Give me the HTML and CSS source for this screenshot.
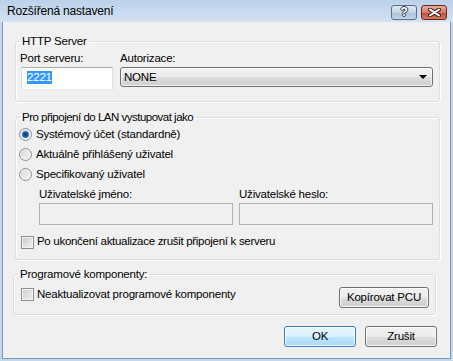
FILE: index.html
```html
<!DOCTYPE html>
<html>
<head>
  <title>Rozšířená nastavení</title>
  <link rel="stylesheet" href="styles.css">
</head>
<body>
<div class="window">
  <div class="titlebar">
    <span class="title">Rozšířená nastavení</span>
    <div class="caption-buttons">
      <span class="cap cap-help">?</span>
      <span class="cap cap-close">
        <svg width="13" height="9" viewBox="0 0 13 9">
          <path d="M2 1.5 L11 7.5 M11 1.5 L2 7.5" stroke="#3b2a26" stroke-width="4" stroke-linecap="round"/>
          <path d="M2 1.5 L11 7.5 M11 1.5 L2 7.5" stroke="#ffffff" stroke-width="2" stroke-linecap="round"/>
        </svg>
      </span>
    </div>
  </div>

  <div class="client">
    <!-- HTTP server -->
    <fieldset class="group group-http">
      <legend>HTTP Server</legend>
      <div class="http-row">
        <div class="field field-port">
          <label>Port serveru:</label>
          <div class="textbox"><span class="selected">2221</span></div>
        </div>
        <div class="field field-auth">
          <label>Autorizace:</label>
          <div class="combo">
            <span>NONE</span>
            <span class="arrow"></span>
          </div>
        </div>
      </div>
    </fieldset>

    <!-- LAN account -->
    <fieldset class="group group-lan">
      <legend>Pro připojení do LAN vystupovat jako</legend>
      <div class="option"><span class="radio checked"></span>Systémový účet (standardně)</div>
      <div class="option"><span class="radio"></span>Aktuálně přihlášený uživatel</div>
      <div class="option"><span class="radio"></span>Specifikovaný uživatel</div>
      <div class="credentials">
        <div class="field">
          <label>Uživatelské jméno:</label>
          <input type="text" class="textbox-input" disabled>
        </div>
        <div class="field">
          <label>Uživatelské heslo:</label>
          <input type="password" class="textbox-input" disabled>
        </div>
      </div>
      <div class="checkrow checkrow-lan"><span class="check"></span>Po ukončení aktualizace zrušit připojení k serveru</div>
    </fieldset>

    <!-- program components -->
    <fieldset class="group group-pcu">
      <legend>Programové komponenty:</legend>
      <div class="pcu-row">
        <div class="checkrow"><span class="check"></span>Neaktualizovat programové komponenty</div>
        <button class="btn btn-pcu">Kopírovat PCU</button>
      </div>
    </fieldset>

    <div class="dialog-buttons">
      <button class="btn btn-default">OK</button>
      <button class="btn">Zrušit</button>
    </div>
  </div>
</div>
</body>
</html>
```

FILE: styles.css
```css
/* Reset and base font */
body {
  margin: 0;
  padding: 0;
  font-family: "Liberation Sans", Arial, sans-serif;
  font-size: 11.5px;
  letter-spacing: -0.2px;
  line-height: 15px;
  color: #000;
  background: #c4d7ed;
}

/* Window frame */
.window {
  width: 453px;
  height: 361px;
  box-sizing: border-box;
  padding: 0 2px 2px 2px;
  background: #c4d7ed;
  display: flex;
  flex-direction: column;
}

.titlebar {
  height: 22px;
  margin: 0 -2px;
  padding: 0 6px 0 7px;
  display: flex;
  align-items: center;
  justify-content: space-between;
  background: linear-gradient(#bcd1ea, #d3e2f2);
}

.title {
  margin-top: 1px;
  font-size: 12px;
}

.caption-buttons {
  display: flex;
  gap: 4px;
  margin-top: 2px;
}

.cap {
  width: 24px;
  height: 13px;
  border: 1px solid #58708d;
  border-radius: 3px;
  display: flex;
  align-items: center;
  justify-content: center;
}

.cap-help {
  background: linear-gradient(#e2ebf5 0%, #c4d3e4 50%, #acc0d7 51%, #c3d5e9 100%);
  color: #fff;
  font-weight: bold;
  font-size: 12px;
  text-shadow: 0 0 1px #2f3f55, 1px 0 0 #2f3f55, -1px 0 0 #2f3f55, 0 1px 0 #2f3f55, 0 -1px 0 #2f3f55;
}

.cap-close {
  border-color: #6b2a20;
  background: linear-gradient(#e9a99b 0%, #d47c66 50%, #c14a2e 51%, #d77a5e 100%);
}

/* Client area */
.client {
  flex: 1;
  background: #f0f0f0;
  border: 1px solid #7a96b8;
  border-top: none;
  display: flex;
  flex-direction: column;
}

/* Group boxes */
.group {
  border: 1px solid #d5dfe5;
  border-radius: 3px;
  box-shadow: inset 1px 1px 0 #fff, 1px 1px 0 #fff;
  min-width: 0;
}

.group legend {
  padding: 0 2px;
}

.group-http {
  margin: 12px 10px 0 12px;
  padding: 2px 6px 11px 4px;
}

.group-lan {
  margin: 8px 10px 0 12px;
  padding: 2px 6px 10px 4px;
}

.group-lan legend {
  letter-spacing: -0.5px;
}

.group-pcu {
  margin: 7px 14px 0 10px;
  padding: 5px 6px 6px 4px;
}

/* HTTP row */
.http-row {
  display: flex;
  gap: 7px;
  align-items: flex-start;
}

.field {
  display: flex;
  flex-direction: column;
}

.field-port {
  width: 93px;
}

.field-auth {
  flex: 1;
}

.field label {
  display: block;
}

.textbox {
  margin: 1px 0 0 1px;
  height: 23px;
  box-sizing: border-box;
  background: #fff;
  border: 1px solid #dbdfe6;
  border-top-color: #abadb3;
  border-bottom-color: #e3e9ef;
  padding: 2px 0 0 5px;
}

.selected {
  background: #3399ff;
  color: #fff;
  display: inline-block;
  line-height: 13px;
}

.combo {
  margin-top: 1px;
  height: 20px;
  box-sizing: border-box;
  border: 1px solid #707070;
  border-radius: 3px;
  background: linear-gradient(#f2f2f2 0%, #ebebeb 50%, #dddddd 51%, #cfcfcf 100%);
  box-shadow: inset 0 0 0 1px rgba(255, 255, 255, 0.7);
  display: flex;
  align-items: center;
  justify-content: space-between;
  padding: 0 5px 0 3px;
}

.arrow {
  width: 0;
  height: 0;
  border-left: 4px solid transparent;
  border-right: 4px solid transparent;
  border-top: 4px solid #000;
}

/* Radio options */
.option {
  display: flex;
  align-items: flex-start;
  height: 20px;
}

.radio {
  width: 13px;
  height: 13px;
  box-sizing: border-box;
  margin: 1px 4px 0 -1px;
  border: 1px solid #8c8f92;
  border-radius: 50%;
  background: linear-gradient(135deg, #d4d6d8, #f8f8f8);
  box-shadow: inset 0 0 0 1px #f4f4f4;
  position: relative;
}

.radio.checked::after {
  content: "";
  position: absolute;
  left: 2px;
  top: 2px;
  width: 7px;
  height: 7px;
  border-radius: 50%;
  background: radial-gradient(circle at 50% 50%, #0d2a5e 0%, #1d5fae 45%, #5ba3e8 100%);
}

/* Credentials */
.credentials {
  display: flex;
  gap: 6px;
  margin-left: 19px;
}

.credentials .field {
  flex: 1;
}

.textbox-input {
  margin: 1px 0 0 0;
  height: 22px;
  box-sizing: border-box;
  background: #f0f0f0;
  border: 1px solid #adb2b5;
  padding: 0;
  font: inherit;
}

/* Checkboxes */
.checkrow {
  display: flex;
  align-items: flex-start;
}

.checkrow-lan {
  margin-top: 9px;
  letter-spacing: -0.3px;
}

.check {
  width: 13px;
  height: 13px;
  box-sizing: border-box;
  margin: 2px 3px 0 1px;
  border: 1px solid #8e8f8f;
  background: linear-gradient(135deg, #c6c9cd, #f3f3f3);
  box-shadow: inset 0 0 0 1px #f5f5f5;
}

/* Program components row */
.pcu-row {
  display: flex;
  justify-content: space-between;
  align-items: flex-start;
}

.pcu-row .check {
  margin-top: 1px;
  margin-left: 3px;
}

/* Buttons */
.btn {
  font: inherit;
  letter-spacing: inherit;
  color: #000;
  height: 21px;
  box-sizing: border-box;
  border: 1px solid #707070;
  border-radius: 3px;
  background: linear-gradient(#f2f2f2 0%, #ebebeb 50%, #dddddd 51%, #cfcfcf 100%);
  box-shadow: inset 0 0 0 1px rgba(255, 255, 255, 0.8);
  padding: 0;
}

.btn-pcu {
  width: 90px;
}

.btn-default {
  border-color: #3c7fb1;
  background: linear-gradient(#eaf6fd 0%, #d9f0fc 50%, #bee6fd 51%, #a7d9f5 100%);
}

.dialog-buttons {
  display: flex;
  justify-content: flex-end;
  gap: 9px;
  margin: 11px 13px 0 0;
}

.dialog-buttons .btn {
  width: 72px;
}
```
